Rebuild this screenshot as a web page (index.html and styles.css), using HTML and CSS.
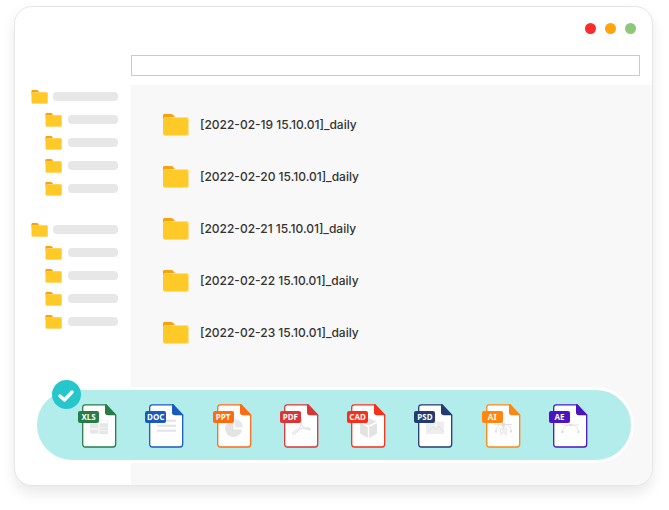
FILE: index.html
```html
<!DOCTYPE html>
<html lang="en">
<head>
<meta charset="utf-8">
<title>Daily backups</title>
<link rel="stylesheet" href="styles.css">
</head>
<body>
<svg class="defs" aria-hidden="true">
  <symbol id="folder" viewBox="0 0 27 22">
    <path d="M1 8V2Q1 0 3 0H9Q10 0 11 1L13 3V8Z" fill="#ff9f0f"/>
    <path d="M1 5Q1 3 3 3H25Q27 3 27 5V20Q27 22 25 22H3Q1 22 1 20Z" fill="#ffe08a"/>
    <path d="M1 6Q1 4 3 4H24Q26 4 26 6V19Q26 21 24 21H3Q1 21 1 19Z" fill="#ffca28"/>
    <path d="M1 5V2Q1 0 3 0H9Q10 0 12 2Q10 3 9 3H4Q2 3 1 5Z" fill="#ff9f0f"/>
  </symbol>
  <symbol id="sheet" viewBox="0 0 40 44">
    <path d="M8.500 .8H29L38.700 11V40Q38.700 43 36 43H8.500Q5.700 43 5.700 40V3.800Q5.700 .8 8.500 .8Z" fill="#fff" stroke="currentColor" stroke-width="1.300"/>
    <path d="M28 .2H29.300L39.400 11.300H31Q28 11.300 28 8.500Z" fill="currentColor"/>
  </symbol>
</svg>
<main class="window">
  <header class="titlebar">
    <div class="controls">
      <button class="dot close" aria-label="Close"></button>
      <button class="dot minimize" aria-label="Minimize"></button>
      <button class="dot maximize" aria-label="Maximize"></button>
    </div>
    <input class="address" type="text" aria-label="Address">
  </header>
  <div class="body">
    <nav class="sidebar" aria-label="Folders">
      <ul class="tree">
        <li class="node root"><svg class="mini"><use href="#folder"/></svg><span class="bar"></span></li>
        <li class="node"><svg class="mini"><use href="#folder"/></svg><span class="bar"></span></li>
        <li class="node"><svg class="mini"><use href="#folder"/></svg><span class="bar"></span></li>
        <li class="node"><svg class="mini"><use href="#folder"/></svg><span class="bar"></span></li>
        <li class="node"><svg class="mini"><use href="#folder"/></svg><span class="bar"></span></li>
      </ul>
      <ul class="tree">
        <li class="node root"><svg class="mini"><use href="#folder"/></svg><span class="bar"></span></li>
        <li class="node"><svg class="mini"><use href="#folder"/></svg><span class="bar"></span></li>
        <li class="node"><svg class="mini"><use href="#folder"/></svg><span class="bar"></span></li>
        <li class="node"><svg class="mini"><use href="#folder"/></svg><span class="bar"></span></li>
        <li class="node"><svg class="mini"><use href="#folder"/></svg><span class="bar"></span></li>
      </ul>
    </nav>
    <ul class="files">
      <li class="file"><svg class="folder"><use href="#folder"/></svg><span>[2022-02-19 15.10.01]_daily</span></li>
      <li class="file"><svg class="folder"><use href="#folder"/></svg><span>[2022-02-20 15.10.01]_daily</span></li>
      <li class="file"><svg class="folder"><use href="#folder"/></svg><span>[2022-02-21 15.10.01]_daily</span></li>
      <li class="file"><svg class="folder"><use href="#folder"/></svg><span>[2022-02-22 15.10.01]_daily</span></li>
      <li class="file"><svg class="folder"><use href="#folder"/></svg><span>[2022-02-23 15.10.01]_daily</span></li>
    </ul>
  </div>
  <section class="formats" aria-label="Supported formats">
    <svg class="check" viewBox="0 0 29 29" aria-hidden="true">
      <circle cx="14.500" cy="14.500" r="14.500" fill="#26c6cc"/>
      <path d="M8 16L12.500 20L20 12" fill="none" stroke="#fff" stroke-width="3.400" stroke-linecap="round" stroke-linejoin="round"/>
    </svg>
    <div class="type xls">
      <svg class="sheet" viewBox="0 0 40 44"><use href="#sheet"/><g fill="#e6e6e6"><path d="M13 16H31V30H13Z" fill="#f3f3f3"/><path d="M14 17H22V19H14ZM23 17H30V19H23Z" fill="#fff"/><path d="M13 20H21V24H13ZM23 19.500H31V30H23ZM13 26H21V29H13Z"/><path d="M23 23.500H31M23 26.500H31" stroke="#f2f2f2" stroke-width=".7"/></g></svg>
      <span class="tag">XLS</span>
    </div>
    <div class="type doc">
      <svg class="sheet" viewBox="0 0 40 44"><use href="#sheet"/><path d="M13 16.800H32M13 21.800H32M13 26.800H32" stroke="#e1e3e6" stroke-width="2"/></svg>
      <span class="tag">DOC</span>
    </div>
    <div class="type ppt">
      <svg class="sheet" viewBox="0 0 40 44"><use href="#sheet"/><path d="M21.500 16V25.500H30A8.500 8.500 0 1 1 21.500 16Z" fill="#e3e3e3"/><path d="M23 15A8.500 8.500 0 0 1 31 23.500H23Z" fill="#e8e8e8"/></svg>
      <span class="tag">PPT</span>
    </div>
    <div class="type pdf">
      <svg class="sheet" viewBox="0 0 40 44"><use href="#sheet"/><path d="M22 15C24 20 19 28 15.500 30C12 31 14 27 19 25.500C24 24 31 23 31.500 25C31 27 25 25 22.500 21C20.500 18 20 14 22 15Z" fill="none" stroke="#e1e1e1" stroke-width="1.100"/></svg>
      <span class="tag">PDF</span>
    </div>
    <div class="type cad">
      <svg class="sheet" viewBox="0 0 40 44"><use href="#sheet"/><path d="M22.500 14L30.500 17.500L22.500 21.500L14.500 17.500ZM14 19L21.800 23V34L14 29.500ZM31 19L23.200 23V34L31 29.500Z" fill="#e3e3e3"/></svg>
      <span class="tag">CAD</span>
    </div>
    <div class="type psd">
      <svg class="sheet" viewBox="0 0 40 44"><use href="#sheet"/><path d="M13 17.500H31V30H13Z" fill="#eee"/><path d="M15 28L20 23L23 26L26 22L30 28" fill="none" stroke="#e0e0e0"/><circle cx="23" cy="21" r="1.200" fill="#fafafa"/></svg>
      <span class="tag">PSD</span>
    </div>
    <div class="type ai">
      <svg class="sheet" viewBox="0 0 40 44"><use href="#sheet"/><g fill="none" stroke="#dddddd" stroke-width=".8"><path d="M13 20.500H31M15 27C15 23 18 21 20 20.500M30 27C30 23 27 21 25 20.500M22.500 19V26M20 32V29L19 26L22.500 21L26 26L25 29V32M20 29H25"/><circle cx="22.500" cy="26" r="1.500"/></g><path d="M21 19H24V22H21ZM14 26.500H16V28.500H14ZM29 26.500H31V28.500H29Z" fill="#dddddd"/></svg>
      <span class="tag">AI</span>
    </div>
    <div class="type ae">
      <svg class="sheet" viewBox="0 0 40 44"><use href="#sheet"/><path d="M14 21H31M14.500 28C14.500 24 17 21 22.500 21S30.500 24 30.500 28" fill="none" stroke="#e0e0e0" stroke-width=".9"/><path d="M21.500 20H23.500V22H21.500ZM13.500 27H15.500V29H13.500ZM29.500 27H31.500V29H29.500Z" fill="#dadada"/></svg>
      <span class="tag">AE</span>
    </div>
  </section>
</main>
</body>
</html>
```

FILE: styles.css
```css
* { box-sizing: border-box; }

body {
  margin: 0;
  padding: 6px 16px 24px 14px;
  background: #fff;
  color: #333;
  font-family: Inter, "Noto Sans", sans-serif;
}

ul { margin: 0; padding: 0; list-style: none; }

.defs { position: absolute; width: 0; height: 0; }

.window {
  position: relative;
  display: flex;
  flex-direction: column;
  min-height: calc(100vh - 30px);
  overflow: hidden;
  border: 1px solid #e6e6e6;
  border-radius: 18px;
  background: #fff;
  box-shadow: 0 7px 14px rgba(0, 0, 0, 0.09);
}

.titlebar {
  display: flex;
  flex-direction: column;
  gap: 21px;
  padding: 16px 12px 9px 116px;
}

.controls {
  display: flex;
  justify-content: flex-end;
  gap: 9px;
  padding-right: 4px;
}

.dot {
  width: 11px;
  height: 11px;
  padding: 0;
  border: 0;
  border-radius: 50%;
}

.close { background: #fb2c2c; }
.minimize { background: #ffa40b; }
.maximize { background: #8fc778; }

.address {
  width: 100%;
  height: 21px;
  padding: 0 8px;
  border: 1px solid #cbcbcb;
  border-radius: 0;
  background: #fff;
  font: inherit;
  font-size: 12px;
}

.body { display: flex; flex: 1; }

.sidebar {
  display: flex;
  flex-direction: column;
  flex: none;
  gap: 18px;
  width: 116px;
  padding-right: 13px;
}

.node {
  display: flex;
  align-items: center;
  gap: 6px;
  height: 23px;
  padding-left: 30px;
}

.root { gap: 5px; padding-left: 16px; }

.mini { flex: none; width: 17px; height: 14px; }

.bar {
  flex: 1;
  height: 9px;
  border-radius: 4px;
  background: #e7e7e7;
}

.files {
  flex: 1;
  padding: 14px 31px 101px;
  background: #f8f8f8;
}

.file {
  display: flex;
  align-items: center;
  gap: 11px;
  height: 52px;
  font-size: 12px;
  font-weight: 500;
  line-height: 18px;
}

.folder { flex: none; width: 27px; height: 22px; }

.formats {
  position: absolute;
  right: 18px;
  bottom: 22px;
  left: 19px;
  display: flex;
  align-items: center;
  justify-content: space-between;
  height: 76px;
  padding: 2px 43px 0 40px;
  border: 3px solid #fff;
  border-radius: 38px;
  background: #b2edeb;
}

.check {
  position: absolute;
  top: -10px;
  left: 15px;
  width: 29px;
  height: 29px;
}

.type { position: relative; width: 40px; height: 44px; }

.sheet { display: block; width: 40px; height: 44px; }

.tag {
  position: absolute;
  top: 7px;
  left: 1px;
  width: 21px;
  height: 12px;
  border-radius: 2px;
  background: currentColor;
  font: bold 8px/12px "Noto Sans", sans-serif;
  text-align: center;
  -webkit-text-fill-color: #fff;
}

.xls { color: #267d47; }
.doc { color: #185abd; }
.ppt { color: #ff6a13; }
.pdf { color: #dc3535; }
.cad { color: #fb2e18; }
.psd { color: #233c70; }
.ai { color: #ff870f; }
.ae { color: #4b14c1; }
```
